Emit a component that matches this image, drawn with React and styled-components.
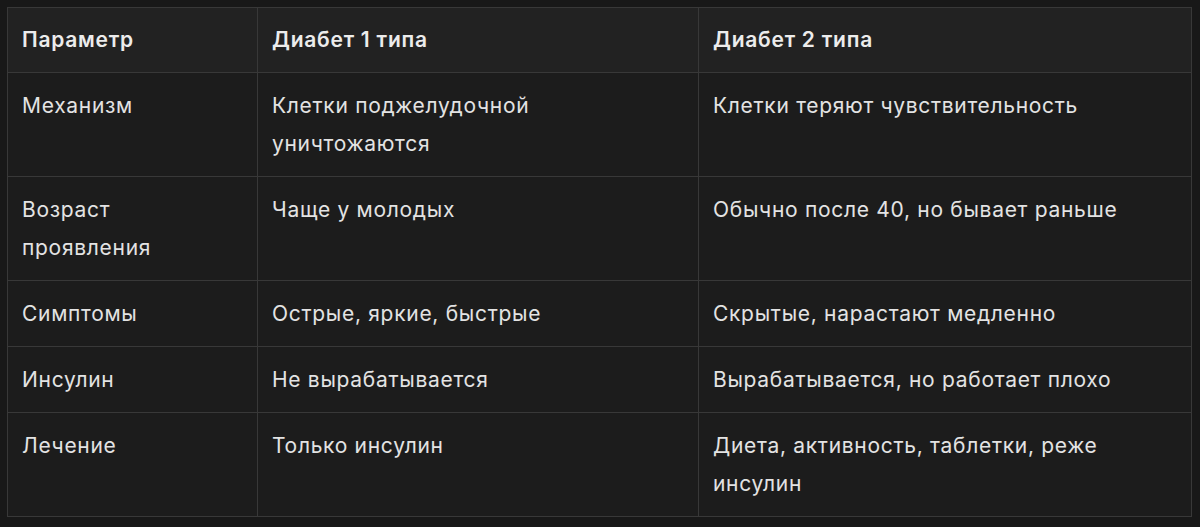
import React from "react";
import styled, { createGlobalStyle } from "styled-components";

const Global = createGlobalStyle`
  html, body { margin: 0; padding: 0; background: #181818; }
  body { font-family: Inter, "Noto Sans", sans-serif; }
`;

const Page = styled.div`
  padding: 7px 10px 10px 7px;
`;

const Table = styled.table`
  width: 1184px;
  border-collapse: collapse;
  background: #1c1c1c;
  border: 1px solid #383838;
  table-layout: fixed;
`;

const Col = styled.col`
  width: ${(p) => p.$w}px;
`;

const HeadRow = styled.tr`
  background: #222222;
`;

const Th = styled.th`
  text-align: left;
  font-weight: 600;
  font-size: 21px;
  letter-spacing: 0.75px;
  line-height: 38px;
  color: #ececec;
  padding: 13px 14px;
  border: 1px solid #383838;
`;

const Td = styled.td`
  text-align: left;
  vertical-align: top;
  font-weight: 400;
  font-size: 21px;
  letter-spacing: 0.7px;
  line-height: 38px;
  color: #e3e3e3;
  padding: 14px 14px 13px;
  border: 1px solid #383838;
`;

const rows = [
  ["Механизм", "Клетки поджелудочной уничтожаются", "Клетки теряют чувствительность"],
  ["Возраст проявления", "Чаще у молодых", "Обычно после 40, но бывает раньше"],
  ["Симптомы", "Острые, яркие, быстрые", "Скрытые, нарастают медленно"],
  ["Инсулин", "Не вырабатывается", "Вырабатывается, но работает плохо"],
  ["Лечение", "Только инсулин", "Диета, активность, таблетки, реже инсулин"],
];

export default function App() {
  return (
    <>
      <Global />
      <Page>
        <Table>
          <colgroup>
            <Col $w={250} />
            <Col $w={441} />
            <Col $w={493} />
          </colgroup>
          <thead>
            <HeadRow>
              <Th>Параметр</Th>
              <Th>Диабет 1 типа</Th>
              <Th>Диабет 2 типа</Th>
            </HeadRow>
          </thead>
          <tbody>
            {rows.map((r) => (
              <tr key={r[0]}>
                {r.map((c, i) => (
                  <Td key={i}>{c}</Td>
                ))}
              </tr>
            ))}
          </tbody>
        </Table>
      </Page>
    </>
  );
}
